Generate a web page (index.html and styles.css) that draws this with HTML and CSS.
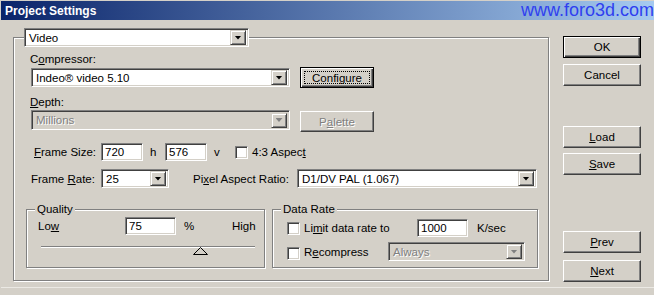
FILE: index.html
```html
<!DOCTYPE html>
<html lang="en">
<head>
    <meta charset="UTF-8">
    <meta name="viewport" content="width=device-width, initial-scale=1.0">
    <title>Project Settings</title>
    <link rel="stylesheet" href="styles.css">
</head>
<body>
    <div class="window">
        <div class="titlebar">
            <span class="title">Project Settings</span>
            <span class="watermark">www.foro3d.com</span>
        </div>
        <div class="dialog">
            <div class="panel">
                <div class="select select-video">
                    <span class="select-text">Video</span>
                    <span class="arrow"></span>
                </div>

                <div class="label label-compressor">C<u>o</u>mpressor:</div>
                <div class="row row-compressor">
                    <div class="select select-codec">
                        <span class="select-text">Indeo® video 5.10</span>
                        <span class="arrow"></span>
                    </div>
                    <button class="btn btn-side btn-focus">Configure</button>
                </div>

                <div class="label label-depth"><u>D</u>epth:</div>
                <div class="row row-depth">
                    <div class="select select-codec select-depth disabled">
                        <span class="select-text">Millions</span>
                        <span class="arrow"></span>
                    </div>
                    <button class="btn btn-side btn-palette disabled">P<u>a</u>lette</button>
                </div>

                <div class="row row-size">
                    <span class="size-label"><u>F</u>rame Size:</span>
                    <input class="field input-size" type="text" value="720">
                    <span class="unit unit-h">h</span>
                    <input class="field input-size" type="text" value="576">
                    <span class="unit unit-v">v</span>
                    <span class="check"></span>
                    <span class="check-label">4:3 Aspec<u>t</u></span>
                </div>

                <div class="row row-rate">
                    <span class="rate-label">Frame <u>R</u>ate:</span>
                    <div class="select select-rate">
                        <span class="select-text">25</span>
                        <span class="arrow"></span>
                    </div>
                    <span class="par-label">Pi<u>x</u>el Aspect Ratio:</span>
                    <div class="select select-par">
                        <span class="select-text">D1/DV PAL (1.067)</span>
                        <span class="arrow"></span>
                    </div>
                </div>

                <div class="groups">
                    <div class="group group-quality">
                        <span class="group-title">Quality</span>
                        <div class="row quality-row">
                            <span class="low">Lo<u>w</u></span>
                            <input class="field input-small" type="text" value="75">
                            <span class="percent">%</span>
                            <span>High</span>
                        </div>
                        <div class="slider">
                            <svg class="thumb" width="16" height="9" viewBox="0 0 16 9">
                                <polygon points="7.5,0.5 0.5,7.5 14.5,7.5" fill="#d4d0c8" stroke="#000" stroke-width="1"/>
                            </svg>
                        </div>
                    </div>
                    <div class="group group-rate">
                        <span class="group-title">Data Rate</span>
                        <div class="row limit-row">
                            <span class="check"></span>
                            <span class="check-label limit-label">Li<u>m</u>it data rate to</span>
                            <input class="field input-small" type="text" value="1000">
                            <span class="ksec">K/sec</span>
                        </div>
                        <div class="row recompress-row">
                            <span class="check"></span>
                            <span class="check-label recompress-label">R<u>e</u>compress</span>
                            <div class="select select-always disabled">
                                <span class="select-text">Always</span>
                                <span class="arrow"></span>
                            </div>
                        </div>
                    </div>
                </div>
            </div>

            <div class="buttons">
                <button class="btn btn-default btn-ok">OK</button>
                <button class="btn btn-cancel">Cancel</button>
                <button class="btn btn-load"><u>L</u>oad</button>
                <button class="btn btn-save"><u>S</u>ave</button>
                <button class="btn btn-prev"><u>P</u>rev</button>
                <button class="btn btn-next"><u>N</u>ext</button>
            </div>
        </div>
        <div class="bottom-edge"></div>
    </div>
</body>
</html>
```

FILE: styles.css
```css
* {
    box-sizing: border-box;
}
body {
    margin: 0;
    background-color: #d4d0c8;
    font-family: "Liberation Sans", Arial, sans-serif;
    font-size: 11.5px;
    color: #000;
}
.window {
    width: 654px;
    height: 295px;
    padding: 1px 0 0 1px;
    overflow: hidden;
}

/* title bar */
.titlebar {
    position: relative;
    height: 19px;
    display: flex;
    align-items: center;
    padding-left: 4px;
    background: linear-gradient(to right, #0a246a, #a6caf0);
}
.title {
    color: #fff;
    font-size: 12px;
    font-weight: bold;
}
.watermark {
    position: absolute;
    right: 0;
    top: 0;
    font-size: 18px;
    line-height: 18px;
    color: #2f3ff0;
}

/* layout */
.dialog {
    display: flex;
    padding-left: 12px;
}
.panel {
    width: 536px;
    height: 244px;
    margin-top: 17px;
    border: 1px solid #808080;
    box-shadow: 1px 1px 0 #fff, inset 1px 1px 0 #fff;
}
.bottom-edge {
    height: 1px;
    margin-top: 5px;
    background-color: #ebe9e4;
}
.row {
    display: flex;
    align-items: center;
}
.label {
    line-height: 14px;
    margin-left: 16px;
}

/* sunken controls */
.field,
.select,
.check {
    border: 1px solid;
    border-color: #808080 #fff #fff #808080;
    box-shadow: inset 1px 1px 0 #404040, inset -1px -1px 0 #d4d0c8;
    background-color: #fff;
}
.field {
    height: 18px;
    padding: 0 3px;
    font-family: inherit;
    font-size: inherit;
    color: #000;
    outline: none;
}
.select {
    display: flex;
    align-items: center;
    height: 19px;
    padding: 2px;
}
.select-text {
    flex: 1;
    padding-left: 2px;
    white-space: nowrap;
}
.arrow {
    width: 16px;
    height: 15px;
    display: flex;
    align-items: center;
    justify-content: center;
    background-color: #d4d0c8;
    border: 1px solid;
    border-color: #d4d0c8 #404040 #404040 #d4d0c8;
    box-shadow: inset 1px 1px 0 #fff, inset -1px -1px 0 #808080;
}
.arrow::after {
    content: "";
    width: 7px;
    height: 4px;
    background-color: #000;
    clip-path: polygon(0 0, 100% 0, 50% 100%);
}
.select.disabled {
    background-color: #d4d0c8;
}
.disabled .select-text,
.btn.disabled {
    color: #808080;
    text-shadow: 1px 1px 0 #fff;
}
.disabled .arrow::after {
    background-color: #808080;
}
.check {
    width: 13px;
    height: 13px;
    flex: none;
}
.check-label {
    margin-left: 4px;
}

/* buttons */
.btn {
    width: 78px;
    height: 22px;
    padding: 0;
    font-family: inherit;
    font-size: inherit;
    color: #000;
    background-color: #d4d0c8;
    border: 1px solid;
    border-color: #fff #404040 #404040 #fff;
    box-shadow: inset -1px -1px 0 #808080;
}
.btn-default,
.btn-focus {
    border-color: #000;
    box-shadow: inset 1px 1px 0 #fff, inset -1px -1px 0 #404040, inset -2px -2px 0 #808080;
}
.btn-focus {
    outline: 1px dotted #000;
    outline-offset: -5px;
}
.btn-side {
    width: 74px;
    height: 21px;
    margin-left: 10px;
}

/* main panel rows */
.select-video {
    width: 225px;
    margin: -10px 0 0 10px;
}
.label-compressor {
    margin-top: 5px;
}
.row-compressor {
    margin: 1px 0 0 17px;
    height: 21px;
}
.select-codec {
    width: 259px;
}
.label-depth {
    margin-top: 7px;
}
.row-depth {
    margin: 1px 0 0 17px;
    height: 22px;
    align-items: flex-start;
}
.select-depth {
    height: 20px;
}
.btn-palette {
    margin-top: 1px;
}

.row-size {
    margin: 11px 0 0 20px;
    height: 18px;
}
.size-label {
    width: 67px;
}
.input-size {
    width: 42px;
}
.unit {
    padding-left: 7px;
}
.unit-h {
    width: 22px;
}
.unit-v {
    width: 28px;
}

.row-rate {
    margin: 8px 0 0 17px;
    height: 19px;
}
.rate-label {
    width: 70px;
}
.select-rate {
    width: 68px;
}
.par-label {
    width: 104px;
    margin-left: 24px;
}
.select-par {
    width: 240px;
}

/* group boxes */
.groups {
    display: flex;
    margin: 21px 0 0 12px;
}
.group {
    display: flex;
    flex-direction: column;
    height: 59px;
    border: 1px solid #808080;
    box-shadow: 1px 1px 0 #fff, inset 1px 1px 0 #fff;
}
.group-quality {
    width: 239px;
}
.group-rate {
    width: 266px;
    margin-left: 7px;
}
.group-title {
    align-self: flex-start;
    line-height: 14px;
    margin: -8px 0 0 8px;
    padding: 0 2px;
    background-color: #d4d0c8;
}

.quality-row {
    margin: 1px 0 0 11px;
    height: 18px;
}
.low {
    width: 87px;
}
.input-small {
    width: 51px;
}
.percent {
    width: 48px;
    margin-left: 8px;
}
.slider {
    position: relative;
    width: 214px;
    height: 2px;
    margin: 11px 0 0 14px;
    border-top: 1px solid #808080;
    border-bottom: 1px solid #fff;
}
.thumb {
    position: absolute;
    left: 152px;
    top: 0;
}

.limit-row {
    margin: 3px 0 0 14px;
    height: 18px;
}
.limit-label {
    width: 113px;
}
.ksec {
    margin-left: 9px;
}
.recompress-row {
    margin: 5px 0 0 14px;
    height: 19px;
}
.recompress-row .check {
    margin-top: 3px;
}
.recompress-label {
    width: 84px;
}
.select-always {
    width: 137px;
}

/* right column */
.buttons {
    display: flex;
    flex-direction: column;
    margin-left: 14px;
    padding-top: 16px;
}
.btn-cancel {
    margin-top: 6px;
}
.btn-load {
    margin-top: 40px;
}
.btn-save {
    margin-top: 5px;
}
.btn-prev {
    margin-top: 56px;
}
.btn-next {
    margin-top: 7px;
}
```
